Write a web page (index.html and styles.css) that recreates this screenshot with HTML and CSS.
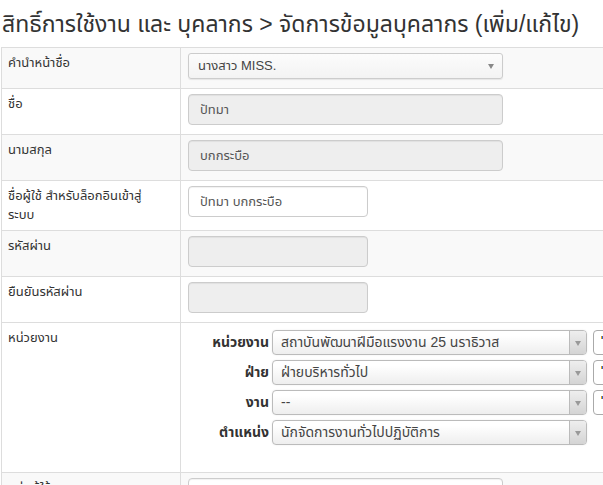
FILE: index.html
```html
<!DOCTYPE html>
<html lang="th">
<head>
<meta charset="utf-8">
<link rel="stylesheet" href="styles.css">
</head>
<body>
<div class="page">
  <h1 class="title">สิทธิ์การใช้งาน และ บุคลากร &gt; จัดการข้อมูลบุคลากร (เพิ่ม/แก้ไข)</h1>
  <table class="form-table">
    <tr class="striped">
      <td class="lbl">คำนำหน้าชื่อ</td>
      <td class="val"><div class="sel-flat">นางสาว MISS.<span class="caret"></span></div></td>
    </tr>
    <tr>
      <td class="lbl">ชื่อ</td>
      <td class="val"><div class="inp disabled long">ปัทมา</div></td>
    </tr>
    <tr class="striped">
      <td class="lbl">นามสกุล</td>
      <td class="val"><div class="inp disabled long">บกกระบือ</div></td>
    </tr>
    <tr>
      <td class="lbl">ชื่อผู้ใช้ สำหรับล็อกอินเข้าสู่<br>ระบบ</td>
      <td class="val"><div class="inp short">ปัทมา บกกระบือ</div></td>
    </tr>
    <tr class="striped">
      <td class="lbl">รหัสผ่าน</td>
      <td class="val"><div class="inp disabled short"></div></td>
    </tr>
    <tr>
      <td class="lbl">ยืนยันรหัสผ่าน</td>
      <td class="val"><div class="inp disabled short"></div></td>
    </tr>
    <tr>
      <td class="lbl">หน่วยงาน</td>
      <td class="val nested-cell">
        <div class="nested">
          <span class="nlbl">หน่วยงาน</span>
          <div class="sel-grad">สถาบันพัฒนาฝีมือแรงงาน 25 นราธิวาส<span class="arrow-box"><span class="caret"></span></span></div>
          <span class="btn-mini"><span class="ico"></span></span>

          <span class="nlbl">ฝ่าย</span>
          <div class="sel-grad">ฝ่ายบริหารทั่วไป<span class="arrow-box"><span class="caret"></span></span></div>
          <span class="btn-mini"><span class="ico"></span></span>

          <span class="nlbl">งาน</span>
          <div class="sel-grad">--<span class="arrow-box"><span class="caret"></span></span></div>
          <span class="btn-mini"><span class="ico"></span></span>

          <span class="nlbl">ตำแหน่ง</span>
          <div class="sel-grad">นักจัดการงานทั่วไปปฏิบัติการ<span class="arrow-box"><span class="caret"></span></span></div>
          <span></span>
        </div>
      </td>
    </tr>
    <tr class="striped">
      <td class="lbl">กลุ่มผู้ใช้งาน</td>
      <td class="val"><div class="inp white long">&nbsp;</div></td>
    </tr>
  </table>
</div>
</body>
</html>
```

FILE: styles.css
```css
html, body {
  margin: 0;
  padding: 0;
  background: #fff;
  overflow: hidden;
}
body {
  font-family: "Liberation Sans", "Noto Sans Thai", "Noto Sans", Tahoma, sans-serif;
  color: #333;
  font-size: 13px;
}
.page {
  padding-left: 1px;
  width: 680px;
}
.title {
  margin: 0;
  padding: 8px 0 0 1px;
  height: 39px;
  font-size: 23px;
  line-height: 32px;
  font-weight: normal;
  color: #333;
  white-space: nowrap;
}
.form-table {
  border-collapse: collapse;
  width: 680px;
}
.form-table td {
  border: 1px solid #ddd;
  vertical-align: top;
}
.form-table tr.striped td {
  background: #f9f9f9;
}
.lbl {
  width: 165px;
  padding: 5px 7px 6px 6px;
  line-height: 19px;
}
.val {
  padding: 5px 8px 6px 7px;
}
.inp {
  box-sizing: border-box;
  height: 31px;
  margin-bottom: 3px;
  border: 1px solid #ccc;
  border-radius: 4px;
  padding: 0 11px;
  line-height: 29px;
  color: #555;
  background: #fff;
  box-shadow: inset 0 1px 1px rgba(0,0,0,0.06);
}
.inp.disabled {
  background: #eee;
}
.inp.long { width: 315px; }
.inp.short { width: 180px; }
.sel-flat {
  position: relative;
  box-sizing: border-box;
  width: 315px;
  height: 26px;
  margin-bottom: 3px;
  border: 1px solid #ccc;
  border-radius: 3px;
  padding: 0 9px;
  line-height: 24px;
  color: #444;
  background: linear-gradient(#fcfcfc, #f3f3f3);
  box-shadow: 0 1px 1px rgba(0,0,0,0.08);
}
.sel-flat .caret {
  position: absolute;
  right: 8px;
  top: 10px;
}
.caret {
  display: block;
  width: 0;
  height: 0;
  border-left: 3px solid transparent;
  border-right: 3px solid transparent;
  border-top: 5px solid #888;
}
.nested-cell {
  padding-top: 7px;
  padding-bottom: 27px;
}
.nested {
  display: grid;
  grid-template-columns: 81px 315px 30px;
  column-gap: 3px;
  row-gap: 5px;
  align-items: center;
}
.nlbl {
  text-align: right;
  font-weight: bold;
  font-size: 14px;
  color: #333;
}
.sel-grad {
  position: relative;
  box-sizing: border-box;
  height: 25px;
  border: 1px solid #bbb;
  border-radius: 4px;
  padding: 0 8px;
  line-height: 23px;
  font-size: 14px;
  color: #444;
  background: linear-gradient(#fff 20%, #eee 100%);
  box-shadow: 0 0 2px rgba(0,0,0,0.08);
}
.arrow-box {
  position: absolute;
  right: 0;
  top: 0;
  bottom: 0;
  width: 16px;
  border-left: 1px solid #bbb;
  border-radius: 0 3px 3px 0;
  background: linear-gradient(#eee, #d4d4d4);
}
.arrow-box .caret {
  position: absolute;
  left: 5px;
  top: 10px;
  border-top-color: #999;
}
.btn-mini {
  box-sizing: border-box;
  margin-left: 3px;
  height: 25px;
  width: 30px;
  border: 1px solid #aaa;
  border-radius: 4px;
  background: #fff;
  position: relative;
}
.btn-mini .ico {
  position: absolute;
  left: 7px;
  top: 5px;
  width: 4px;
  height: 3px;
  background: linear-gradient(90deg, #e0a020 0 33%, #3060d0 33% 66%, #d04040 66%);
}
```
